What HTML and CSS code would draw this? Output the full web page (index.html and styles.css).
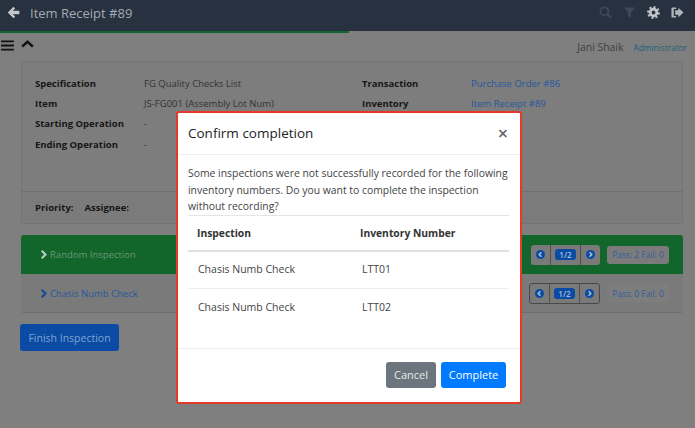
FILE: index.html
```html
<!DOCTYPE html>
<html lang="en">
<head>
<meta charset="utf-8">
<title>Item Receipt #89</title>
<link rel="stylesheet" href="styles.css">
</head>
<body>
<header class="topbar">
  <svg class="back" viewBox="0 0 14 14"><path d="M7 .8 .8 7 7 13.200 8.800 11.400 6.200 8.900H13.300V5.100H6.200L8.800 2.600z"/></svg>
  <h1 class="title">Item Receipt #89</h1>
  <div class="top-icons">
    <svg class="ti dim" viewBox="0 0 14 14"><circle cx="5.800" cy="5.800" r="4.300" fill="none" stroke="currentColor" stroke-width="2"/><path d="m9 9 4 4" stroke="currentColor" stroke-width="2.400"/></svg>
    <svg class="ti dim" viewBox="0 0 14 14"><path d="M1 1.500h12L8.500 7v6L5.500 11V7z" fill="currentColor"/></svg>
    <svg class="ti gear" viewBox="0 0 14 14"><circle cx="7" cy="7" r="3.600" fill="none" stroke="currentColor" stroke-width="3"/><circle cx="7" cy="7" r="5.900" fill="none" stroke="currentColor" stroke-width="2" pathLength="32" stroke-dasharray="2 2"/></svg>
    <svg class="ti out" viewBox="0 0 14 14"><path fill="currentColor" d="M1.500 1.500h4v1.600H3v7.800h2.500v1.600h-4a1 1 0 0 1-1-1V2.500a1 1 0 0 1 1-1zM8 1.800 13.500 7 8 12.200V9.400H4.500V4.600H8z"/></svg>
  </div>
</header>
<div class="progress"><div class="progress-fill"></div></div>
<main class="page">
  <div class="toolbar">
    <div class="tool-left">
      <svg class="bars" viewBox="0 0 14 12"><path d="M0 .5h14v2H0zM0 5h14v2H0zM0 9.500h14v2H0z"/></svg>
      <svg class="caret" viewBox="0 0 14 9"><path d="M7 0 14 6.500 12 8.500 7 3.800 2 8.500 0 6.500z"/></svg>
    </div>
    <div class="user"><span class="user-name">Jani Shaik</span><span class="user-role">Administrator</span></div>
  </div>
  <section class="card">
    <div class="details">
      <div class="col col-a">
        <div class="row"><b class="label">Specification</b><span>FG Quality Checks List</span></div>
        <div class="row"><b class="label">Item</b><span>JS-FG001 (Assembly Lot Num)</span></div>
        <div class="row"><b class="label">Starting Operation</b><span>-</span></div>
        <div class="row"><b class="label">Ending Operation</b><span>-</span></div>
      </div>
      <div class="col col-b">
        <div class="row"><b class="label">Transaction</b><a class="link">Purchase Order #86</a></div>
        <div class="row"><b class="label">Inventory</b><a class="link">Item Receipt #89</a></div>
      </div>
    </div>
    <div class="card-foot"><b>Priority:</b><b>Assignee:</b></div>
  </section>
  <section class="accordion">
    <div class="acc acc-green">
      <span class="acc-title"><svg class="chev" viewBox="0 0 8 12"><path d="M2 0 8 6l-6 6-2-2 4-4-4-4z"/></svg>Random Inspection</span>
      <div class="pager"><span class="pg"><svg class="circ" viewBox="0 0 10 10"><circle cx="5" cy="5" r="5"/><path d="M6 2.500 3.500 5 6 7.500" fill="none"/></svg></span><span class="pg pg-mid"><em>1/2</em></span><span class="pg"><svg class="circ" viewBox="0 0 10 10"><circle cx="5" cy="5" r="5"/><path d="M4 2.500 6.500 5 4 7.500" fill="none"/></svg></span></div>
      <span class="score score-solid">Pass: 2 Fail: 0</span>
    </div>
    <div class="acc acc-gray">
      <span class="acc-title link"><svg class="chev chev-blue" viewBox="0 0 8 12"><path d="M2 0 8 6l-6 6-2-2 4-4-4-4z"/></svg>Chasis Numb Check</span>
      <div class="pager pager-line"><span class="pg"><svg class="circ" viewBox="0 0 10 10"><circle cx="5" cy="5" r="5"/><path d="M6 2.500 3.500 5 6 7.500" fill="none"/></svg></span><span class="pg pg-mid"><em>1/2</em></span><span class="pg"><svg class="circ" viewBox="0 0 10 10"><circle cx="5" cy="5" r="5"/><path d="M4 2.500 6.500 5 4 7.500" fill="none"/></svg></span></div>
      <span class="score">Pass: 0 Fail: 0</span>
    </div>
  </section>
  <button class="finish">Finish Inspection</button>
</main>
<div class="modal" role="dialog">
  <div class="modal-head"><h2>Confirm completion</h2><span class="close">×</span></div>
  <div class="modal-body">
    <p>Some inspections were not successfully recorded for the following inventory numbers. Do you want to complete the inspection without recording?</p>
    <table>
      <thead><tr><th class="c1">Inspection</th><th>Inventory Number</th></tr></thead>
      <tbody>
        <tr><td class="c1">Chasis Numb Check</td><td>LTT01</td></tr>
        <tr><td class="c1">Chasis Numb Check</td><td>LTT02</td></tr>
      </tbody>
    </table>
  </div>
  <div class="modal-foot"><button class="btn btn-gray">Cancel</button><button class="btn btn-blue">Complete</button></div>
</div>
</body>
</html>
```
FILE: styles.css
```css
* { box-sizing: border-box; }
html, body { height: 100%; }
body { margin: 0; background: #7f7f7f; color: #333; font-family: "Open Sans", "Noto Sans", sans-serif; font-size: 9.5px; overflow: hidden; }
.topbar { height: 31px; background: #27313f; display: flex; align-items: center; padding: 0 11px 6px 7px; }
.back { width: 13px; height: 13px; fill: #c4c8cc; }
.title { margin: 0 0 0 10px; font-size: 13px; font-weight: 400; color: #a3abb5; }
.top-icons { margin-left: auto; display: flex; gap: 11px; align-items: center; }
.ti { width: 13px; height: 13px; color: #c4c8cc; }
.ti.dim { color: #3d4957; }
.ti.out { color: #aeb5bd; }
.progress { height: 2px; }
.progress-fill { width: 349px; height: 2px; background: #13662b; }
.page { padding: 0 12px 0 20px; }
.toolbar { display: flex; justify-content: space-between; align-items: flex-start; height: 28px; margin: 0 -4px 0 -19px; }
.tool-left { display: flex; align-items: center; gap: 7px; padding-top: 7px; }
.bars { width: 13px; height: 11px; fill: #111; }
.caret { width: 13px; height: 8px; fill: #111; margin-top: -3px; }
.user { padding-top: 7px; display: flex; gap: 10px; align-items: baseline; }
.user-name { font-size: 10.4px; color: #3f3f3f; }
.user-role { font-size: 8.300px; color: #1c5f78; }
.card { border: 1px solid #737373; border-radius: 3px; background: #7d7d7d; margin-left: 1px; }
.details { display: flex; height: 129px; padding: 11px 13px; }
.col-a { width: 327px; }
.row { display: flex; height: 20.300px; align-items: center; }
.label { width: 109px; color: #161616; font-weight: 700; flex: none; }
.link { color: #26589f; }
.card-foot { height: 32px; border-top: 1px solid #707070; background: #7b7b7b; display: flex; align-items: center; gap: 11px; padding: 0 13px; color: #161616; }
.accordion { margin-top: 11px; margin-left: 1px; }
.acc { height: 39px; display: flex; align-items: center; padding: 0 14px 0 20px; }
.acc-gray { background: #7a7a7a; border-bottom: 1px solid #6e6e6e; border-radius: 0 0 3px 3px; }
.acc-green { background: #13662b; border-radius: 3px 3px 0 0; }
.acc-title { flex: 1; display: flex; align-items: center; gap: 3px; }
.acc-green .acc-title { color: #6a9577; }
.chev { width: 6px; height: 9px; fill: #b9c9bd; }
.chev-blue { fill: #154a98; }
.pager { display: flex; height: 20px; border-radius: 3px; background: #7a7a7a; }
.pager-line { border: 1px solid #484848; height: 21px; }
.pg { width: 20px; display: flex; align-items: center; justify-content: center; border-right: 1px solid #505050; }
.pg:last-child { border-right: 0; width: 19px; }
.pg-mid { width: 30px; }
.pg-mid em { font-style: normal; font-size: 8px; font-weight: 600; color: #a9bedb; background: #0a4ba3; border-radius: 3px; padding: 0 4px; line-height: 11px; }
.circ { width: 9px; height: 9px; fill: #0a4ba3; }
.circ path { stroke: #b5c4d8; stroke-width: 1.600; }
.score { margin-left: 7px; width: 62px; height: 18px; display: flex; align-items: center; justify-content: center; font-size: 8.400px; color: #2f5e9e; white-space: nowrap; border-radius: 3px; background: #7d7d7d; }
.score-solid { background: #7b7b7b; }
.finish { margin-top: 11px; display: block; width: 99px; height: 27px; border: 0; border-radius: 3px; background: #0b4ba3; color: #7fa3d4; font: 400 10.500px "Open Sans", "Noto Sans", sans-serif; padding: 0; }
.modal { position: fixed; left: 176px; top: 111px; width: 346px; height: 293px; background: #fff; border: 2px solid #e5392a; border-radius: 3px; display: flex; flex-direction: column; color: #444; }
.modal-head { height: 42px; flex: none; display: flex; align-items: center; justify-content: space-between; padding: 0 12px 2px 10px; border-bottom: 1px solid #eee; }
.modal-head h2 { margin: 0; font-size: 13.500px; font-weight: 500; color: #222; }
.close { font-size: 18px; font-weight: 600; color: #666; line-height: 1; }
.modal-body { flex: 1; padding: 10px 11px 0 10px; }
.modal-body p { margin: 0; font-size: 10.400px; line-height: 16.600px; height: 50px; }
table { width: 100%; border-collapse: collapse; font-size: 10.500px; }
th { text-align: left; font-weight: 700; font-size: 10.300px; color: #333; height: 35px; border-top: 1px solid #e5e5e5; border-bottom: 2px solid #e0e0e0; padding: 0 0 0 2px; }
th.c1 { width: 170px; padding-left: 9px; }
td { height: 38px; border-bottom: 1px solid #eee; padding: 0 0 2px 4px; }
tr:last-child td { border-bottom: 0; }
td.c1 { padding-left: 10px; }
.modal-foot { height: 54px; flex: none; border-top: 1px solid #eee; display: flex; justify-content: flex-end; align-items: center; gap: 5px; padding: 0 14px 2px; }
.btn { height: 26px; border: 0; border-radius: 3px; color: #fff; font: 400 11px "Open Sans", "Noto Sans", sans-serif; padding: 0; }
.btn-gray { width: 50px; background: #6c757d; color: #e8e8e8; }
.btn-blue { width: 65px; background: #007bff; }
```
